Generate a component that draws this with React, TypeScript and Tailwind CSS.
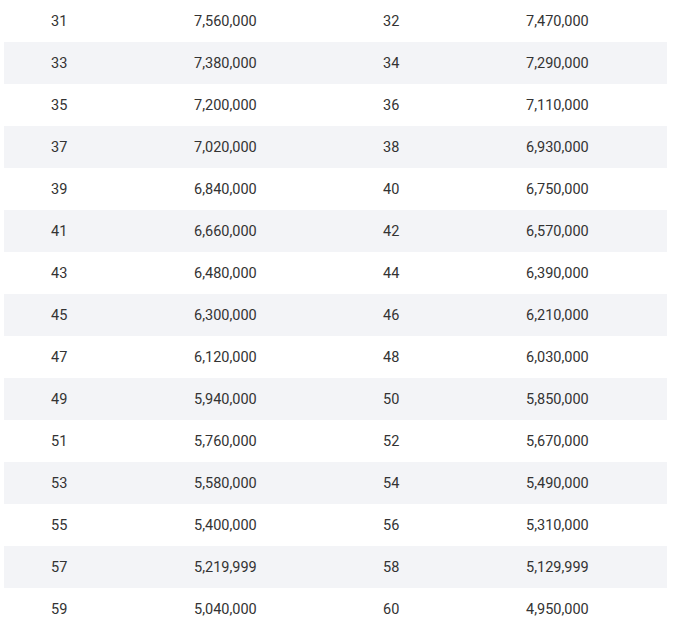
import React from 'react'

const rows: [number, string, number, string][] = [
  [31, '7,560,000', 32, '7,470,000'],
  [33, '7,380,000', 34, '7,290,000'],
  [35, '7,200,000', 36, '7,110,000'],
  [37, '7,020,000', 38, '6,930,000'],
  [39, '6,840,000', 40, '6,750,000'],
  [41, '6,660,000', 42, '6,570,000'],
  [43, '6,480,000', 44, '6,390,000'],
  [45, '6,300,000', 46, '6,210,000'],
  [47, '6,120,000', 48, '6,030,000'],
  [49, '5,940,000', 50, '5,850,000'],
  [51, '5,760,000', 52, '5,670,000'],
  [53, '5,580,000', 54, '5,490,000'],
  [55, '5,400,000', 56, '5,310,000'],
  [57, '5,219,999', 58, '5,129,999'],
  [59, '5,040,000', 60, '4,950,000'],
]

export default function App() {
  return (
    <div className="bg-white min-h-screen px-[4px] font-['Roboto',sans-serif] text-[14.5px] text-[#333]">
      <div className="w-[663px]">
        {rows.map((r, i) => (
          <div
            key={i}
            className={
              'grid grid-cols-[143px_189px_143px_188px] h-[42px] pt-[2px] items-center ' +
              (i % 2 === 1 ? 'bg-[#f3f4f7]' : '')
            }
          >
            <div className="pl-[47px]">{r[0]}</div>
            <div className="pl-[47px]">{r[1]}</div>
            <div className="pl-[47px]">{r[2]}</div>
            <div className="pl-[47px]">{r[3]}</div>
          </div>
        ))}
      </div>
    </div>
  )
}
